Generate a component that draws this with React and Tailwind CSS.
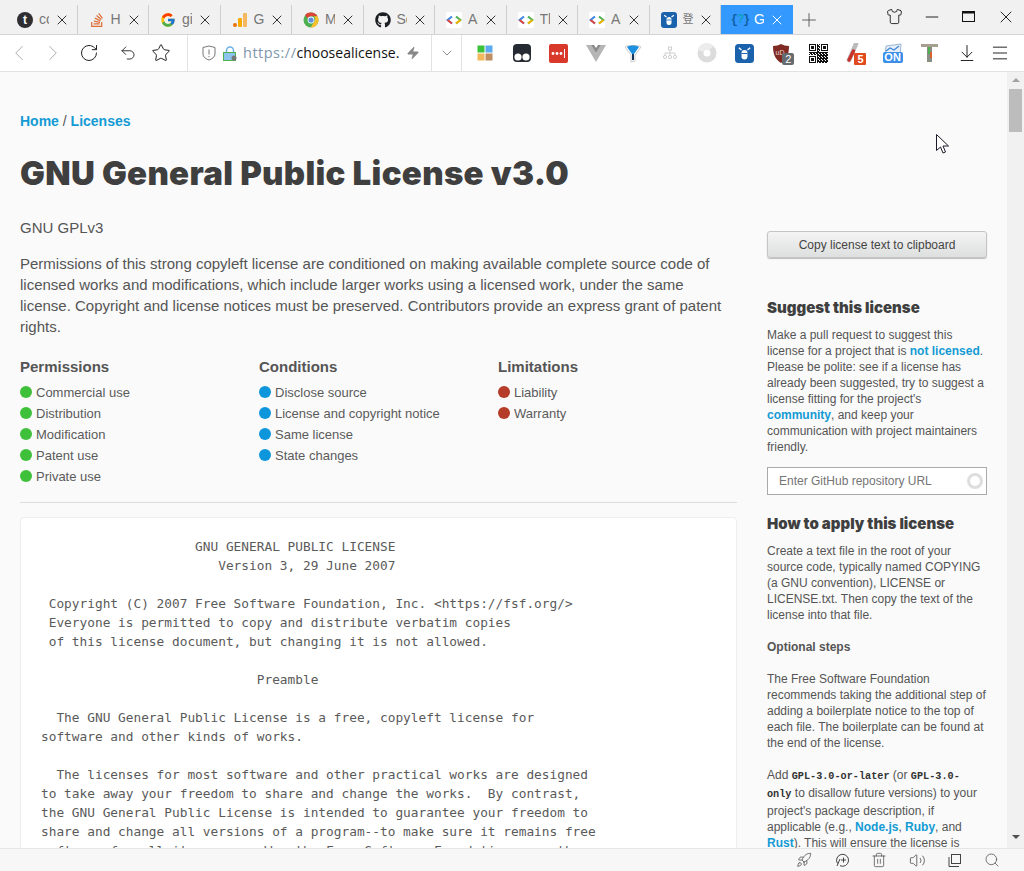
import { ChevronLeft, ChevronRight, ChevronDown, RotateCw, Undo2, Star, Zap, Plus, X, Minus, Shirt, Search, Trash2, Volume2, Rocket, Menu, ArrowDownToLine } from "lucide-react";
import { FcGoogle } from "react-icons/fc";
import { FaGithub, FaStackOverflow } from "react-icons/fa";

const mono = `                    GNU GENERAL PUBLIC LICENSE
                       Version 3, 29 June 2007

 Copyright (C) 2007 Free Software Foundation, Inc. <https://fsf.org/>
 Everyone is permitted to copy and distribute verbatim copies
 of this license document, but changing it is not allowed.

                            Preamble

  The GNU General Public License is a free, copyleft license for
software and other kinds of works.

  The licenses for most software and other practical works are designed
to take away your freedom to share and change the works.  By contrast,
the GNU General Public License is intended to guarantee your freedom to
share and change all versions of a program--to make sure it remains free
software for all its users.  We, the Free Software Foundation, use the`;

const Tumblr = () => (
  <div className="w-4 h-4 rounded-full bg-[#2f2f33] flex items-center justify-center text-white text-[12px] font-bold leading-none">t</div>
);

const Bars = () => (
  <svg width="16" height="16" viewBox="0 0 16 16">
    <rect x="1" y="11" width="4" height="4" rx="2" fill="#e8710a" />
    <rect x="6" y="6" width="4" height="9" rx="1" fill="#f9ab00" />
    <rect x="11" y="1" width="4" height="14" rx="1" fill="#f4b860" />
  </svg>
);

const ChromeIcon = () => (
  <svg width="16" height="16" viewBox="0 0 16 16">
    <circle cx="8" cy="8" r="7.5" fill="#4caf50" />
    <path d="M8 .5a7.5 7.5 0 0 1 6.5 3.75H8a3.75 3.75 0 0 0-3.4 2.2L2 2.9A7.5 7.5 0 0 1 8 .5z" fill="#db4437" />
    <path d="M14.5 4.25A7.5 7.5 0 0 1 7.6 15.5l3.4-5.6a3.75 3.75 0 0 0 0-5.65z" fill="#fbc02d" />
    <circle cx="8" cy="8" r="3.4" fill="#fff" />
    <circle cx="8" cy="8" r="2.6" fill="#5c8fe0" />
  </svg>
);

const CodeIcon = () => (
  <svg width="16" height="16" viewBox="0 0 16 16">
    <rect width="16" height="16" rx="2" fill="#fff" />
    <path d="M6 4.5 1.5 8 6 11.5" fill="none" stroke="#3b82e6" strokeWidth="2" />
    <path d="M10 4.5 14.5 8 10 11.5" fill="none" stroke="#4caf50" strokeWidth="2" />
    <path d="M1.5 8 6 11.5" fill="none" stroke="#e2483d" strokeWidth="2" />
    <path d="M14.5 8 10 11.5" fill="none" stroke="#f4b400" strokeWidth="2" />
  </svg>
);

const BugIcon = ({ size = 16 }) => (
  <svg width={size} height={size} viewBox="0 0 16 16">
    <rect width="16" height="16" rx="3" fill="#1b62ac" />
    <rect x="5.5" y="5" width="5" height="8" rx="2.5" fill="#fff" />
    <path d="M5.5 8h5" stroke="#1b62ac" strokeWidth=".8" />
    <path d="M5.5 5 3.2 3.2M10.5 5l2.3-1.8" stroke="#fff" strokeWidth="1.2" />
  </svg>
);

const BraceIcon = () => (
  <div className="w-4 h-4 flex items-center justify-center text-[12px] font-bold leading-none text-[#0f5f9f] [font-family:'Liberation_Mono',monospace] whitespace-nowrap tracking-[-1px]">
    {"{"}<span className="text-[#0d9dc4]">?</span>{"}"}
  </div>
);

const tabs = [
  { icon: <Tumblr />, label: "co" },
  { icon: <FaStackOverflow size={16} color="#e0703a" />, label: "Hi" },
  { icon: <FcGoogle size={16} />, label: "gi" },
  { icon: <Bars />, label: "Go" },
  { icon: <ChromeIcon />, label: "Mi" },
  { icon: <FaGithub size={16} color="#1b1f23" />, label: "Se" },
  { icon: <CodeIcon />, label: "An" },
  { icon: <CodeIcon />, label: "Th" },
  { icon: <CodeIcon />, label: "An" },
  { icon: <BugIcon />, label: "登", small: true },
  { icon: <BraceIcon />, label: "G", active: true },
];

const Tab = ({ icon, label, active, small }) => (
  <div className={`w-[71.5px] h-[29px] shrink-0 flex items-center pl-[11px] ${active ? "bg-[#3399ff]" : "border-r border-[#cfcfcf]"}`}>
    {icon}
    <div className={`ml-[6px] overflow-hidden whitespace-nowrap ${small ? "w-[11px] text-[11px]" : "w-[10px] text-[14px]"} ${active ? "text-white" : "text-[#777]"}`}>{label}</div>
    <X size={16} strokeWidth={1.5} className={`shrink-0 ${small ? "ml-[4px]" : "ml-[5px]"} ${active ? "text-white" : "text-[#333]"}`} />
  </div>
);

const Windows = () => (
  <svg width="16" height="16" viewBox="0 0 16 16">
    <rect x="0.5" y="0.5" width="7" height="7" fill="#3cc13b" />
    <rect x="8.5" y="0.5" width="7" height="7" fill="#5cabf0" />
    <rect x="0.5" y="8.5" width="7" height="7" fill="#f2b95c" />
    <rect x="8.5" y="8.5" width="7" height="7" fill="#c08e60" />
  </svg>
);

const Tampermonkey = () => (
  <svg width="18" height="18" viewBox="0 0 18 18">
    <rect width="18" height="18" rx="4" fill="#262b33" />
    <circle cx="5" cy="13" r="3.6" fill="#fff" />
    <circle cx="13" cy="13" r="3.6" fill="#fff" />
  </svg>
);

const LastPass = () => (
  <svg width="19" height="19" viewBox="0 0 19 19">
    <rect width="19" height="19" rx="2" fill="#d8392b" />
    <circle cx="4" cy="9.5" r="1.4" fill="#fff" />
    <circle cx="8" cy="9.5" r="1.4" fill="#fff" />
    <circle cx="12" cy="9.5" r="1.4" fill="#fff" />
    <rect x="15" y="5" width="1" height="9" fill="#fff" />
  </svg>
);

const VueIcon = () => (
  <svg width="20" height="18" viewBox="0 0 20 18">
    <path d="M0 1h5l5 8 5-8h5L10 18z" fill="#b5b5b5" />
    <path d="M5 1h3l2 3 2-3h3l-5 8z" fill="#8a8a8a" />
  </svg>
);

const Funnel = () => (
  <svg width="18" height="20" viewBox="0 0 18 20">
    <path d="M1 4c0-2 16-2 16 0l-6 8v6l-4 1v-7z" fill="#fff" stroke="#ccc" strokeWidth="1" />
    <path d="M3 4c2-2 10-2 12 0l-5 7H8z" fill="#1b8fe0" />
    <path d="M8 11h2v6H8z" fill="#14365c" />
  </svg>
);

const Tree = () => (
  <svg width="14" height="14" viewBox="0 0 14 14" fill="none" stroke="#cfcfcf" strokeWidth="1">
    <rect x="5.5" y="1" width="3" height="3" />
    <path d="M7 4v3M2 9V7h10v2M7 7v2" />
    <circle cx="2" cy="11" r="1.6" />
    <circle cx="7" cy="11" r="1.6" />
    <circle cx="12" cy="11" r="1.6" />
  </svg>
);

const Ring = () => (
  <svg width="20" height="20" viewBox="0 0 20 20">
    <circle cx="10" cy="10" r="6.5" fill="none" stroke="#dcdcdc" strokeWidth="6" />
    <path d="M3.5 8a6.5 6.5 0 0 1 11-3" fill="none" stroke="#ececec" strokeWidth="6" />
  </svg>
);

const Ublock = () => (
  <div className="relative w-[18px] h-[18px]">
    <svg width="18" height="19" viewBox="0 0 18 19">
      <path d="M1 2c3 0 6-1 8-2 2 1 5 2 8 2 0 8-2 13-8 17C3 15 1 10 1 2z" fill="#7f2a23" />
      <text x="3.5" y="11" fontSize="7" fill="#f0d8d0" fontFamily="Liberation Sans">uD</text>
    </svg>
    <div className="absolute left-[10px] top-[9px] w-3 h-3 rounded-[2px] bg-[#666b70] text-white text-[11px] leading-[12px] text-center">2</div>
  </div>
);

// finder squares in three corners, pseudo random modules elsewhere
const qrOn = (x, y) => {
  const finder = (fx, fy) => {
    const dx = x - fx;
    const dy = y - fy;
    if (dx < 0 || dy < 0 || dx > 6 || dy > 6) return null;
    if (dx === 0 || dy === 0 || dx === 6 || dy === 6) return true;
    return dx >= 2 && dx <= 4 && dy >= 2 && dy <= 4;
  };
  for (const [fx, fy] of [[0, 0], [12, 0], [0, 12]]) {
    const f = finder(fx, fy);
    if (f !== null) return f;
  }
  if ((x < 8 && y < 8) || (x > 10 && y < 8) || (x < 8 && y > 10)) return false;
  return (x * 7 + y * 13 + x * y) % 3 !== 0;
};

const Qr = () => {
  const cells = [];
  for (let y = 0; y < 19; y++) {
    for (let x = 0; x < 19; x++) {
      if (qrOn(x, y)) cells.push(<rect key={`${x}-${y}`} x={x} y={y} width="1" height="1" fill="#111" />);
    }
  }
  return (
    <svg width="19" height="19" viewBox="0 0 19 19" shapeRendering="crispEdges">
      {cells}
    </svg>
  );
};

const TestTube = () => (
  <div className="relative w-[18px] h-[20px]">
    <svg width="14" height="20" viewBox="0 0 14 20">
      <path d="M10 1 3 17" stroke="#bbb" strokeWidth="4.5" strokeLinecap="round" />
      <path d="M7.5 8 3 17" stroke="#c8322b" strokeWidth="3.4" strokeLinecap="round" />
    </svg>
    <div className="absolute left-[8px] top-[10px] w-3 h-3 rounded-[1px] bg-[#e04a1c] text-white text-[11px] leading-[12px] text-center font-bold">5</div>
  </div>
);

const OnChart = () => (
  <div className="relative w-5 h-5">
    <svg width="20" height="14" viewBox="0 0 20 14">
      <path d="M2 13 3 3l15-2-1 12z" fill="#e8eef6" stroke="#9db6d6" />
      <path d="M3 8l4-3 4 2 5-4" fill="none" stroke="#3c86d8" strokeWidth="1.2" />
    </svg>
    <div className="absolute left-0 top-[9px] w-5 h-[11px] rounded-[2px] bg-[#3b8eea] text-white text-[11px] leading-[11px] text-center font-bold">ON</div>
  </div>
);

const TIcon = () => (
  <svg width="17" height="18" viewBox="0 0 17 18">
    <rect x="0" y="0" width="17" height="3" fill="#a8a08e" />
    <rect x="6" y="3" width="5" height="15" fill="#8a8f86" />
    <rect x="7" y="3" width="2" height="7" fill="#4caf50" />
    <rect x="9" y="8" width="2" height="6" fill="#d8602c" />
  </svg>
);

const extensions = [
  <Windows />,
  <Tampermonkey />,
  <LastPass />,
  <VueIcon />,
  <Funnel />,
  <Tree />,
  <Ring />,
  <BugIcon size={19} />,
  <Ublock />,
  <Qr />,
  <TestTube />,
  <OnChart />,
  <TIcon />,
  <ArrowDownToLine size={20} strokeWidth={1.1} className="text-[#111]" />,
];

const LicenseColumn = ({ title, items, dot }) => (
  <div className="w-[239px]">
    <h3 className="text-[15px] leading-[20px] font-bold text-[#555]">{title}</h3>
    <ul className="mt-[5px]">
      {items.map((item) => (
        <li key={item} className="h-[21px] flex items-center text-[13px] text-[#5a5a5a]">
          <span className={`w-3 h-3 rounded-full mr-1 -mt-[2px] ${dot}`} />
          {item}
        </li>
      ))}
    </ul>
  </div>
);

const A = ({ children }) => <a className="font-bold text-[#149ad4]">{children}</a>;

const Code = ({ children }) => (
  <code className="font-bold text-[10.2px] text-[#333] [font-family:'Liberation_Mono',monospace]">{children}</code>
);

const Heading = ({ children, className }) => (
  <h3 className={`text-[15px] leading-[20px] font-black text-[#3f3f3f] [font-family:Inter,sans-serif] ${className}`}>{children}</h3>
);

export default function App() {
  return (
    <div className="h-[871px] flex flex-col overflow-hidden relative bg-[#fafafa] [font-family:'Liberation_Sans','Noto_Sans_CJK_SC',Arial,sans-serif]">
      {/* tab strip */}
      <div className="h-[35px] shrink-0 bg-[#f1f1f1] flex items-end pl-[6px] border-b border-[#d4d4d4]">
        <div className="flex h-[29px]">
          {tabs.map((t, i) => (
            <Tab key={i} {...t} />
          ))}
        </div>
        <Plus size={22} strokeWidth={1} className="ml-[5px] mb-[3px] text-[#555]" />
        <div className="ml-[66px] h-[35px] flex items-center text-[#111]">
          <Shirt size={17} strokeWidth={1.2} />
          <Minus size={20} strokeWidth={1.1} className="ml-[19px]" />
          <svg width="13" height="11" viewBox="0 0 13 11" fill="none" stroke="#111" className="ml-[20px]">
            <rect x=".5" y=".5" width="12" height="10" strokeWidth="1" />
            <path d="M0 1.5h13" strokeWidth="2" />
          </svg>
          <X size={20} strokeWidth={1.1} className="ml-[21px]" />
        </div>
      </div>

      {/* toolbar */}
      <div className="h-[37px] shrink-0 bg-white flex items-center border-b border-[#e2e2e2] text-[#444]">
        <ChevronLeft size={26} strokeWidth={0.9} className="ml-[6px] text-[#aaa]" />
        <ChevronRight size={26} strokeWidth={0.9} className="ml-[8px] text-[#aaa]" />
        <RotateCw size={20} strokeWidth={1.2} className="ml-[13px] text-[#222]" />
        <Undo2 size={18} strokeWidth={1.2} className="ml-[20px] text-[#222]" />
        <Star size={20} strokeWidth={1.2} className="ml-[14px] text-[#222]" />
        <div className="ml-[16px] h-full w-[245px] border-x border-[#e2e2e2] flex items-center pl-[14px]">
          <svg width="14" height="16" viewBox="0 0 14 16" fill="none" stroke="#777">
            <path d="M1 2.5 7 1l6 1.5V9c0 3-3 5-6 6-3-1-6-3-6-6z" />
            <path d="M7 4.5v5M7 11v1.2" />
          </svg>
          <svg width="14" height="15" viewBox="0 0 14 15" className="ml-[7px]">
            <path d="M3.5 7V4.5a3.5 3.5 0 0 1 7 0V7" fill="none" stroke="#6aaee8" strokeWidth="1.5" />
            <rect x="0.5" y="6.5" width="12" height="8" fill="#8cc4ee" stroke="#4cb04c" />
            <circle cx="11" cy="12" r="2.5" fill="#777" />
          </svg>
          <div className="ml-[6px] w-[156px] overflow-hidden whitespace-nowrap text-[14.5px] [font-family:'Open_Sans',sans-serif]">
            <span className="text-[#7f97ad] tracking-[0.5px]">https://</span>
            <span className="text-[#111] text-[14px]">choosealicense.com/licenses/gpl-3.0/</span>
          </div>
          <Zap size={14} strokeWidth={1} className="ml-[7px] text-[#888] fill-[#888]" />
        </div>
        <div className="w-[30px] h-full border-r border-[#e2e2e2] flex items-center justify-center">
          <ChevronDown size={16} strokeWidth={1} className="text-[#555]" />
        </div>
        <div className="pl-[4px] h-full flex">
          {extensions.map((el, i) => (
            <div key={i} className="w-[37.1px] h-full flex items-center justify-center shrink-0">
              {el}
            </div>
          ))}
          <div className="w-[29px] h-full flex items-center justify-center shrink-0">
            <Menu size={20} strokeWidth={1.1} className="text-[#111]" />
          </div>
        </div>
      </div>

      {/* page */}
      <div className="flex-1 min-h-0 flex">
        <div className="flex-1 min-w-0 overflow-hidden px-5 pt-[40px]">
          <div className="text-[14px] leading-[18px] text-[#555]">
            <A>Home</A> / <A>Licenses</A>
          </div>
          <h1 className="mt-[23px] text-[33px] leading-[40px] font-black text-[#3f3f3f] tracking-[0.3px] whitespace-nowrap [font-family:Inter,sans-serif]">
            GNU General Public License v3.0
          </h1>
          <div className="flex mt-[24px] gap-[30px]">
            <div className="w-[717px] shrink-0">
              <p className="text-[15px] leading-[21px] text-[#555]">GNU GPLv3</p>
              <p className="mt-[15px] text-[15px] leading-[21px] text-[#555]">
                Permissions of this strong copyleft license are conditioned on making available complete source code of licensed works and modifications, which include larger works using a licensed work, under the same license. Copyright and license notices must be preserved. Contributors provide an express grant of patent rights.
              </p>
              <div className="flex mt-[20px]">
                <LicenseColumn title="Permissions" dot="bg-[#3fc03a]" items={["Commercial use", "Distribution", "Modification", "Patent use", "Private use"]} />
                <LicenseColumn title="Conditions" dot="bg-[#0d96dc]" items={["Disclose source", "License and copyright notice", "Same license", "State changes"]} />
                <LicenseColumn title="Limitations" dot="bg-[#b53c28]" items={["Liability", "Warranty"]} />
              </div>
              <hr className="mt-[15px] border-t border-[#dddddd]" />
              <div className="mt-[14px] bg-white border border-[#eeeeee] rounded pl-[20px] pt-[19px] pb-5">
                <pre className="text-[12.8px] leading-[19px] text-[#5a5a5a] [font-family:'DejaVu_Sans_Mono',monospace]">{mono}</pre>
              </div>
            </div>

            <div className="w-[220px] shrink-0 text-[12px] leading-[16px] text-[#555] -mt-[1px]">
              <button className="mt-[15px] w-full h-[27px] rounded-[3px] border border-[#c4c4c4] bg-gradient-to-b from-[#f4f4f4] to-[#dedfdf] shadow-[0_1px_1px_rgba(0,0,0,0.25)] text-[12px] text-[#444]">
                Copy license text to clipboard
              </button>
              <Heading className="mt-[40px]">Suggest this license</Heading>
              <p className="mt-[9px]">
                Make a pull request to suggest this license for a project that is <A>not licensed</A>. Please be polite: see if a license has already been suggested, try to suggest a license fitting for the project's <A>community</A>, and keep your communication with project maintainers friendly.
              </p>
              <div className="relative mt-[12px] h-[28px] border border-[#aaaaaa] bg-white flex items-center pl-[11px] text-[#757575]">
                Enter GitHub repository URL
                <span className="absolute right-[3px] top-[5px] w-4 h-4 rounded-full border-[3px] border-[#dedede]" />
              </div>
              <Heading className="mt-[19px]">How to apply this license</Heading>
              <p className="mt-[9px]">
                Create a text file in the root of your source code, typically named COPYING (a GNU convention), LICENSE or LICENSE.txt. Then copy the text of the license into that file.
              </p>
              <p className="mt-[16px] font-bold">Optional steps</p>
              <p className="mt-[16px]">
                The Free Software Foundation recommends taking the additional step of adding a boilerplate notice to the top of each file. The boilerplate can be found at the end of the license.
              </p>
              <p className="mt-[16px]">
                Add <Code>GPL-3.0-or-later</Code> (or <Code>GPL-3.0-<br />only</Code> to disallow future versions) to your project's package description, if applicable (e.g., <A>Node.js</A>, <A>Ruby</A>, and <A>Rust</A>). This will ensure the license is displayed in project listings.
              </p>
            </div>
          </div>
        </div>

        {/* scrollbar */}
        <div className="w-[17px] shrink-0 bg-[#f1f1f1] flex flex-col items-center">
          <div className="mt-[6px] w-0 h-0 border-x-[4px] border-x-transparent border-b-[4px] border-b-[#a3a3a3]" />
          <div className="mt-[7px] w-[13px] h-[43px] bg-[#bcbcbc]" />
          <div className="mt-auto mb-[9px] w-0 h-0 border-x-[4px] border-x-transparent border-t-[4px] border-t-[#505050]" />
        </div>
      </div>

      {/* status bar */}
      <div className="h-[23px] shrink-0 bg-[#f7f7f7] border-t border-[#e6e6e6] flex items-center justify-end pr-[24px] text-[#444]">
        <Rocket size={16} strokeWidth={1.1} />
        <svg width="14" height="14" viewBox="0 0 14 14" fill="none" stroke="#444" className="ml-[24px]">
          <path d="M1.5 10.5A6 6 0 1 1 4 12.7M1 13l3-7M5 7h5M7.5 4.5v5" />
        </svg>
        <Trash2 size={16} strokeWidth={1.1} className="ml-[21px]" />
        <Volume2 size={17} strokeWidth={1.1} className="ml-[22px]" />
        <svg width="13" height="13" viewBox="0 0 13 13" fill="none" stroke="#444" className="ml-[22px]">
          <rect x="3.5" y=".5" width="9" height="9" />
          <path d="M1 3v9.5h10" />
        </svg>
        <Search size={16} strokeWidth={1.1} className="ml-[23px]" />
      </div>

      {/* mouse pointer */}
      <svg width="13" height="21" viewBox="0 0 13 21" className="absolute left-[936px] top-[134px]">
        <path d="M.5.5v16l4-3.5 2.5 6 2.5-1-2.5-6h5.5z" fill="#fff" stroke="#1a1a2a" strokeWidth="1" />
      </svg>
    </div>
  );
}
